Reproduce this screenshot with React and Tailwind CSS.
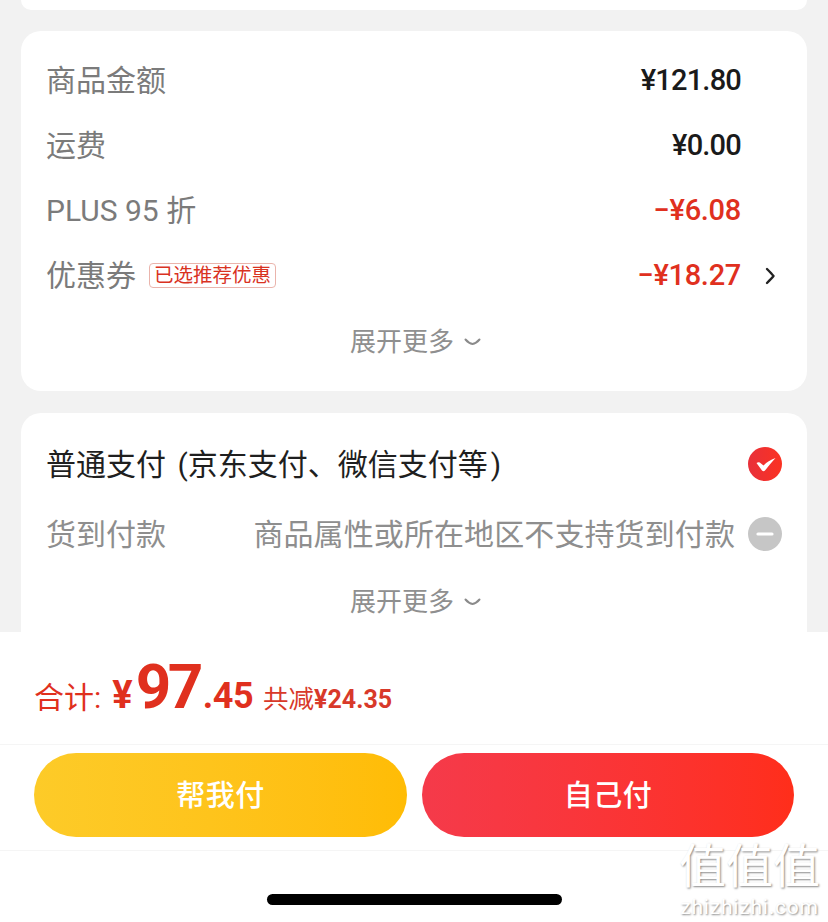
const cjk = "font-['Roboto','Noto_Sans_CJK_SC',sans-serif]";

function ExpandMore() {
  return (
    <div className="flex h-[66px] items-center justify-center gap-[10px] pl-[3px] text-[26px] text-[#8f8f8f]">
      <span>展开更多</span>
      <svg width="17" height="8" viewBox="0 0 17 8" fill="none" stroke="#8a8a8a" strokeWidth="2" strokeLinecap="round" strokeLinejoin="round">
        <path d="M1.5 1.5 Q5 5.5 8.5 6 Q12 5.5 15.5 1.5" />
      </svg>
    </div>
  );
}

function PriceRow({ label, tag, amount, red, arrow }) {
  return (
    <div className="flex h-[65px] items-center">
      <span className="text-[30px] text-[#7b7b7b]">{label}</span>
      {tag && (
        <span className="ml-[13px] flex h-[25px] items-center rounded-[4px] border border-[#eab4ac] px-[4px] text-[19.5px] leading-none text-[#d9321f]">
          {tag}
        </span>
      )}
      <span className={`ml-auto mr-[41px] text-[29px] font-medium ${red ? "tracking-[-0.3px] text-[#e0301e]" : "tracking-[-0.8px] text-[#1a1a1a]"}`}>
        {amount}
      </span>
      {arrow && (
        <svg className="absolute right-[31px]" width="11" height="18" viewBox="0 0 11 18" fill="none" stroke="#222222" strokeWidth="2.4" strokeLinecap="round" strokeLinejoin="round">
          <path d="M2 2 Q7 7 8.5 9 Q7 11 2 16" />
        </svg>
      )}
    </div>
  );
}

export default function App() {
  return (
    <div className={`relative flex h-[922px] w-[828px] flex-col overflow-hidden bg-white ${cjk}`}>
      <div className="flex h-[632px] shrink-0 flex-col overflow-hidden bg-[#f2f2f2] px-[21px]">
        <div className="h-[10px] shrink-0 rounded-b-[20px] bg-white" />

        <div className="relative mt-[21px] h-[360px] shrink-0 rounded-[20px] bg-white pl-[25px] pr-[25px] pt-[17px]">
          <PriceRow label="商品金额" amount="¥121.80" />
          <PriceRow label="运费" amount="¥0.00" />
          <PriceRow label="PLUS 95 折" amount="−¥6.08" red />
          <PriceRow label="优惠券" tag="已选推荐优惠" amount="−¥18.27" red arrow />
          <div className="mt-[1px]">
            <ExpandMore />
          </div>
        </div>

        <div className="mt-[22px] min-h-0 flex-1 rounded-t-[20px] bg-white pl-[25px] pr-[25px] pt-[16px]">
          <div className="flex h-[70px] items-center">
            <span className="text-[30px] text-[#1f1f1f] [word-spacing:4px]">普通支付 (京东支付、微信支付等<span className="ml-[3px]">)</span></span>
            <svg className="ml-auto" width="34" height="34" viewBox="0 0 34 34">
              <defs>
                <linearGradient id="checkFill" x1="0" y1="0" x2="1" y2="0">
                  <stop offset="0" stopColor="#e8303a" />
                  <stop offset="1" stopColor="#fb3222" />
                </linearGradient>
              </defs>
              <circle cx="17" cy="17" r="17" fill="url(#checkFill)" />
              <path d="M8.5 16 Q11 14.5 13 16.5 L15.5 18.5 Q20 13.5 27.5 11 Q22 17 17 23.5 Q15.5 25 14 23.5 Z" fill="#ffffff" />
            </svg>
          </div>
          <div className="flex h-[70px] items-center text-[30px] text-[#8e8e8e]">
            <span>货到付款</span>
            <span className="ml-auto mr-[13px] tracking-[0.1px]">商品属性或所在地区不支持货到付款</span>
            <svg width="34" height="34" viewBox="0 0 34 34">
              <circle cx="17" cy="17" r="17" fill="#c6c6c6" />
              <path d="M10 17 H24" stroke="#ffffff" strokeWidth="3.2" strokeLinecap="round" />
            </svg>
          </div>
          <ExpandMore />
        </div>
      </div>

      <div className="flex h-[113px] shrink-0 items-baseline border-b border-[#f5f5f5] pl-[34px] pt-[24px] text-[#e0301e]">
        <span className="text-[30px]">合计:</span>
        <span className="ml-[11px] text-[38px] font-bold">¥</span>
        <span className="ml-[3px] text-[62px] font-bold leading-none tracking-[-3.5px]">97</span>
        <span className="ml-[3px] text-[36px] font-bold tracking-[-0.5px]">.45</span>
        <span className="ml-[10px] text-[25.5px] text-[#d8392a]">共减</span>
        <span className="text-[25px] font-bold text-[#d8392a]">¥24.35</span>
      </div>

      <div className="flex h-[106px] shrink-0 items-start gap-[15px] border-b border-[#f5f5f5] pl-[34px] pt-[8px]">
        <button className="flex h-[84px] w-[373px] items-center justify-center rounded-full bg-gradient-to-r from-[#fdcb28] to-[#ffbc05] pt-[3px] text-[29px] font-medium tracking-[0.5px] text-white">
          帮我付
        </button>
        <button className="flex h-[84px] w-[372px] items-center justify-center rounded-full bg-gradient-to-r from-[#f53a4a] to-[#ff2e1a] pt-[3px] text-[29px] font-medium tracking-[0.5px] text-white">
          自己付
        </button>
      </div>

      <div className="flex flex-1 justify-center pl-[1px] pt-[43px]">
        <div className="h-[11px] w-[295px] rounded-full bg-black" />
      </div>

      {/* site watermark */}
      <div className="absolute bottom-[6px] right-[8px] flex flex-col items-center gap-[9px] text-white [text-shadow:1px_1px_2px_#8a8a8a]">
        <span className="text-[47px] leading-[46px]">值值值</span>
        <span className="text-[21px] leading-[17px] tracking-[0.8px]">zhizhizhi.com</span>
      </div>
    </div>
  );
}
